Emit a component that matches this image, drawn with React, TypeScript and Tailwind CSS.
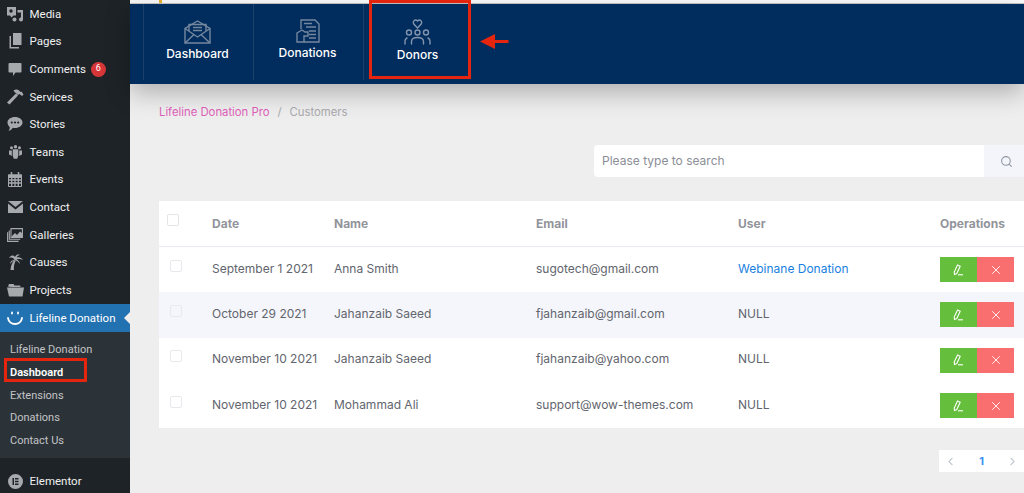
import { FiSearch, FiChevronLeft, FiChevronRight, FiX } from "react-icons/fi";

const MediaIcon = () => (
  <svg width="16" height="16" viewBox="0 0 16 16" fill="currentColor">
    <path d="M0 1h9v8.500H6.500l-2 2-1.500-2H0z" />
    <circle cx="4" cy="5" r="1.700" fill="#1d2327" />
    <path d="M10.500 4H16v9.500a2 2 0 1 1-2-2V6.500h-3.500z" />
    <circle cx="7.500" cy="13.500" r="2" />
  </svg>
);

const PagesIcon = () => (
  <svg width="16" height="16" viewBox="0 0 16 16" fill="currentColor">
    <path d="M6 0h8.500v12H6z" />
    <path d="M4 3v11h8v1.500H2.500V3z" />
  </svg>
);

const CommentIcon = () => (
  <svg width="14" height="15" viewBox="0 0 14 15" fill="currentColor">
    <path d="M1.500 1h11A1 1 0 0 1 13.500 2v7.500a1 1 0 0 1-1 1H7.500L5 14v-3.500H1.500a1 1 0 0 1-1-1V2a1 1 0 0 1 1-1z" />
  </svg>
);

const HammerIcon = () => (
  <svg width="17" height="17" viewBox="0 0 17 17" fill="currentColor">
    <path d="M0 14.500 9 5.500l2 2-8.500 9z" />
    <path d="M6.500 2.500C9 1 11 1.500 12.500 3l1 1 1-.5 2 3-1.500 1.500-2.500-2-1.500 1L7.500 4z" />
  </svg>
);

const StoriesIcon = () => (
  <svg width="16" height="16" viewBox="0 0 16 16" fill="currentColor">
    <path d="M8 1c4.200 0 7.500 2.400 7.500 5.500S12.200 12 8 12c-.8 0-1.500-.1-2.200-.2C5 13.300 3.500 14.500 1.500 15c.8-1 1.200-2 1.200-4.100C1.300 9.800.5 8.200.5 6.500.5 3.400 3.800 1 8 1z" />
    <circle cx="4.800" cy="6.500" r="1.100" fill="#1d2327" />
    <circle cx="8" cy="6.500" r="1.100" fill="#1d2327" />
    <circle cx="11.200" cy="6.500" r="1.100" fill="#1d2327" />
  </svg>
);

const TeamsIcon = () => (
  <svg width="13" height="14" viewBox="0 0 13 14" fill="currentColor">
    <circle cx="2.500" cy="2.800" r="1.500" />
    <circle cx="6.500" cy="1.800" r="1.700" />
    <circle cx="10.500" cy="2.800" r="1.500" />
    <path d="M0 5.500h2.800v5.500L2 10.500 0 9.500zM10.200 5.500H13v4l-2 1-.8.500z" />
    <path d="M3.700 4.300h5.600v6l-1 3.500H4.700l-1-3.500z" />
  </svg>
);

const EventsIcon = () => (
  <svg width="14" height="15" viewBox="0 0 14 15" fill="none" stroke="currentColor">
    <path d="M.5 3h13v11.500H.5z" />
    <path d="M0 3h14v2.500H0z" fill="currentColor" />
    <path d="M3.500 0v3M10.500 0v3" strokeWidth="1.500" />
    <path d="M.5 8h13M.5 11h13M3.700 5v9.500M7 5v9.500M10.300 5v9.500" strokeWidth="1.300" />
  </svg>
);

const ContactIcon = () => (
  <svg width="15" height="12" viewBox="0 0 15 12" fill="currentColor">
    <path d="M0 0h15L7.500 6z" />
    <path d="M0 2.500 7.500 8.500 15 2.500V12H0z" />
  </svg>
);

const GalleriesIcon = () => (
  <svg width="16" height="14" viewBox="0 0 16 14" fill="none" stroke="currentColor" strokeWidth="1.100">
    <path d="M4 .6h11.400v8.800H4z" />
    <path d="M5 8 8 5l2 2 3-3.500 2 1.500v4H5z" fill="currentColor" stroke="none" />
    <path d="M2.300 2.500V11.200h11M.6 4.300V13.400h11" />
  </svg>
);

const PalmIcon = () => (
  <svg width="15" height="16" viewBox="0 0 15 16" fill="currentColor">
    <path d="M2.500 16c.2-4 1.400-7 3.500-9.800l1.800.6C6.300 9.500 5.500 12.500 6 16z" />
    <path d="M6.500 6C5 3.500 3.500 3 1 4c1.200-2.500 4-3.500 6-1 .8-2 3-3 5-2-1.500.3-2.800 1-3.500 2.400C11 2.800 13.500 3.500 15 6c-2-1-4-1.200-6.500-.5 2 .8 3 2.500 3.500 4.500-1.500-2-3-3.200-5-3.800-2 .4-3.500 2-5 3.800.3-2.200 1.500-3.800 3.500-4z" />
  </svg>
);

const FolderIcon = () => (
  <svg width="17" height="14" viewBox="0 0 17 14" fill="currentColor">
    <path d="M1 3.500 2 1h4.500l1 1.500H13l.7 1.500H4z" />
    <path d="M0 4.500h17l-1.500 9H2z" />
  </svg>
);

const SmileIcon = () => (
  <svg width="18" height="17" viewBox="0 0 18 17" fill="none" stroke="currentColor" strokeWidth="1.800" strokeLinecap="round">
    <path d="M6 3.500v1M12 3.500v1" />
    <path d="M2 9c.5 3.500 3.300 6 7 6s6.500-2.500 7-6" />
  </svg>
);

const ElementorIcon = () => (
  <svg width="15" height="15" viewBox="0 0 15 15" fill="currentColor">
    <path
      fillRule="evenodd"
      d="M7.500 0a7.500 7.500 0 1 0 0 15 7.500 7.500 0 0 0 0-15zM4.500 4h1.500v7H4.500zM7 4h3.500v1.400H7zM7 6.800h3.500v1.400H7zM7 9.600h3.500V11H7z"
    />
  </svg>
);

const EnvelopeIcon = () => (
  <svg width="27" height="24" viewBox="0 0 27 24" fill="none" stroke="#75879f" strokeWidth="1.400">
    <path d="M1 8.500V23h25V8.500L13.500 1z" />
    <path d="M1 8.500 13.500 17 26 8.500M1 23l9-8.500M26 23l-9-8.500" />
    <path d="M5 11V4.500h17V11" />
    <path d="M9 7.500h9M9 10.500h9" />
  </svg>
);

const DocIcon = () => (
  <svg width="24" height="24" viewBox="0 0 24 24" fill="none" stroke="#75879f" strokeWidth="1.400">
    <path d="M5 10V1h14l4 4v18H8" />
    <path d="M8 4.500h8M10 8h10M13 12h7M13 15.500h7M13 19h7" />
    <path d="M1 14l5-3 3 2h3v4H8v6H1z" />
  </svg>
);

const PeopleIcon = () => (
  <svg width="27" height="26" viewBox="0 0 27 26" fill="none" stroke="#8394af" strokeWidth="1.400" strokeLinecap="round">
    <path d="M13.500 9 9.800 5C8.500 3 10 1 11.500 1c1 0 2 1 2 1s1-1 2-1C17 1 18.500 3 17.200 5z" />
    <circle cx="5" cy="13.500" r="2.500" />
    <circle cx="13.500" cy="13.500" r="2.500" />
    <circle cx="22" cy="13.500" r="2.500" />
    <path d="M1 25v-3c0-1.500 1-2.500 2-3M7.500 25v-2.500c0-2.500 2.500-4 6-4s6 1.500 6 4V25M26 25v-3c0-1.500-1-2.500-2-3" />
  </svg>
);

const PenIcon = () => (
  <svg width="11" height="12" viewBox="0 0 11 12" fill="none" stroke="#fff" strokeWidth="1.100">
    <path d="M4.500 1 7.200 2.200 3.800 9.500 1.500 10.500 1.200 8z" />
    <path d="M5 10.800h5" />
  </svg>
);

const menuItems = [
  { label: "Media", icon: <MediaIcon /> },
  { label: "Pages", icon: <PagesIcon /> },
  { label: "Comments", icon: <CommentIcon />, badge: "6" },
  { label: "Services", icon: <HammerIcon /> },
  { label: "Stories", icon: <StoriesIcon /> },
  { label: "Teams", icon: <TeamsIcon /> },
  { label: "Events", icon: <EventsIcon /> },
  { label: "Contact", icon: <ContactIcon /> },
  { label: "Galleries", icon: <GalleriesIcon /> },
  { label: "Causes", icon: <PalmIcon /> },
  { label: "Projects", icon: <FolderIcon /> },
];

const subItems = ["Lifeline Donation", "Dashboard", "Extensions", "Donations", "Contact Us"];

const rows = [
  { date: "September 1 2021", name: "Anna Smith", email: "sugotech@gmail.com", user: "Webinane Donation" },
  { date: "October 29 2021", name: "Jahanzaib Saeed", email: "fjahanzaib@gmail.com", user: "NULL" },
  { date: "November 10 2021", name: "Jahanzaib Saeed", email: "fjahanzaib@yahoo.com", user: "NULL" },
  { date: "November 10 2021", name: "Mohammad Ali", email: "support@wow-themes.com", user: "NULL" },
];

const Sidebar = () => (
  <div className="relative w-[130px] shrink-0 bg-[#1d2327] font-['Roboto','Liberation_Sans',sans-serif] text-[11.500px] text-[#f0f0f1]">
    {menuItems.map((item) => (
      <div key={item.label} className="flex h-[27.640px] items-center">
        <span className="flex w-[29.500px] shrink-0 justify-center pl-[1px] text-[#a7aaad]">{item.icon}</span>
        <span className="pt-[1px]">{item.label}</span>
        {item.badge && (
          <span className="ml-[5px] flex h-[15px] w-[15px] items-center justify-center rounded-full bg-[#d63638] text-[9px] text-white">
            {item.badge}
          </span>
        )}
      </div>
    ))}
    <div className="relative flex h-[28px] items-center bg-[#2271b1] text-white">
      <span className="flex w-[29.500px] shrink-0 justify-center pl-[1px]">
        <SmileIcon />
      </span>
      <span className="pt-[1px]">Lifeline Donation</span>
      <span className="absolute right-0 top-[8px] h-0 w-0 border-y-[6px] border-r-[6px] border-y-transparent border-r-[#eeeeee]" />
    </div>
    <div className="flex h-[126px] flex-col bg-[#2c3338] pt-[7px] text-[11px] text-[#c3c4c7]">
      {subItems.map((label) => (
        <div key={label} className={`flex h-[22.800px] items-center pl-[10px] ${label === "Dashboard" ? "font-semibold text-white" : ""}`}>
          {label}
        </div>
      ))}
    </div>
    <div className="flex h-[46px] items-center">
      <span className="flex w-[29.500px] shrink-0 justify-center pl-[1px] pt-[1px] text-[#a7aaad]">
        <ElementorIcon />
      </span>
      <span className="pt-[1px]">Elementor</span>
    </div>
    <div className="absolute left-[4px] top-[358px] h-[24px] w-[83px] border-[3px] border-[#e5250d]" />
  </div>
);

const NavTab = ({ icon, label, raised }: { icon: React.ReactNode; label: string; raised?: boolean }) => (
  <div className={`flex h-[76px] w-[110px] flex-col items-center border-l border-[#1b4168] pr-[2px] ${raised ? "pt-[15px]" : "pt-[16px]"}`}>
    {icon}
    <span className="mt-[1px] text-[12px] font-medium leading-[18px] text-white">{label}</span>
  </div>
);

const Header = () => (
  <div className="relative z-10">
    <div className="flex h-[4px] items-start border-b-[1px] border-[#c9c9c9] bg-white">
      <span className="h-[3px] w-[29px] bg-[#f0f0f1]" />
      <span className="h-[3px] w-[3px] bg-[#e0a92c]" />
    </div>
    <div className="flex h-[80px] bg-[#002d5d] pl-[13px] shadow-[0_8px_24px_rgba(0,0,0,0.28)]">
      <NavTab icon={<EnvelopeIcon />} label="Dashboard" />
      <NavTab icon={<DocIcon />} label="Donations" raised />
      <NavTab icon={<PeopleIcon />} label="Donors" raised />
    </div>
    <div className="absolute left-[239px] top-0 h-[79px] w-[102px] border-[3px] border-[#e5250d]" />
    <svg className="absolute left-[350px] top-[34px]" width="29" height="15" viewBox="0 0 29 15" fill="#e5250d">
      <path d="M0 7.500 15 0v6h13.500v3H15v6z" />
    </svg>
  </div>
);

const SearchBar = () => (
  <div className="mt-[25px] flex justify-end">
    <div className="flex h-[32px] w-[430px]">
      <div className="flex flex-1 items-center rounded-l-[4px] bg-white pl-[8px] text-[12px] text-[#8b8e96]">Please type to search</div>
      <div className="flex w-[40px] items-center justify-center bg-[#f3f5fa] pl-[4px] text-[#8f96a3]">
        <FiSearch size={13} />
      </div>
    </div>
  </div>
);

const colsClass = "grid grid-cols-[53px_122px_202px_202px_202px_84px] items-center";

const Table = () => (
  <div className="mt-[24px] ml-[29px] bg-white text-[12px] text-[#62656d]">
    <div className={`${colsClass} h-[46px] border-b border-[#e9ebf3] font-bold text-[#92949b]`}>
      <span className="ml-[8px] mb-[8px] h-[12px] w-[12px] rounded-[2px] border border-[#e3e4e8]" />
      <span>Date</span>
      <span>Name</span>
      <span>Email</span>
      <span>User</span>
      <span>Operations</span>
    </div>
    {rows.map((row, i) => (
      <div key={i} className={`${colsClass} h-[45.300px] ${i === 1 ? "bg-[#f5f6fb]" : ""}`}>
        <span className="ml-[11px] mb-[8px] h-[12px] w-[12px] rounded-[2px] border border-[#e8e9ec]" />
        <span className="pb-[2px]">{row.date}</span>
        <span className="pb-[2px]">{row.name}</span>
        <span className="pb-[2px]">{row.email}</span>
        <span className={`pb-[2px] ${row.user !== "NULL" ? "text-[#1a7fe0]" : ""}`}>{row.user}</span>
        <div className="flex">
          <button className="flex h-[25px] w-[37px] items-center justify-center bg-[#66bf3c]">
            <PenIcon />
          </button>
          <button className="flex h-[25px] w-[37px] items-center justify-center bg-[#f96e6e] text-white">
            <FiX size={14} strokeWidth={1.5} />
          </button>
        </div>
      </div>
    ))}
  </div>
);

const Pagination = () => (
  <div className="mt-[22px] flex justify-end">
    <div className="flex h-[22px] w-[85px] items-center justify-between bg-white px-[5px] text-[#c3c8d2]">
      <FiChevronLeft size={13} />
      <span className="text-[11px] font-bold text-[#3b8ff0]">1</span>
      <FiChevronRight size={13} />
    </div>
  </div>
);

export default function App() {
  return (
    <div className="flex h-[493px] w-[1024px] overflow-hidden bg-[#eeeeee] font-['Inter','Liberation_Sans',sans-serif]">
      <Sidebar />
      <div className="flex min-w-0 flex-1 flex-col">
        <Header />
        <div className="ml-[29px] mt-[20px] flex gap-[8px] text-[11.300px] leading-[16px]">
          <span className="text-[#df5fba]">Lifeline Donation Pro</span>
          <span className="text-[#a9a9ad]">/</span>
          <span className="text-[#a9a9ad]">Customers</span>
        </div>
        <SearchBar />
        <Table />
        <Pagination />
      </div>
    </div>
  );
}
